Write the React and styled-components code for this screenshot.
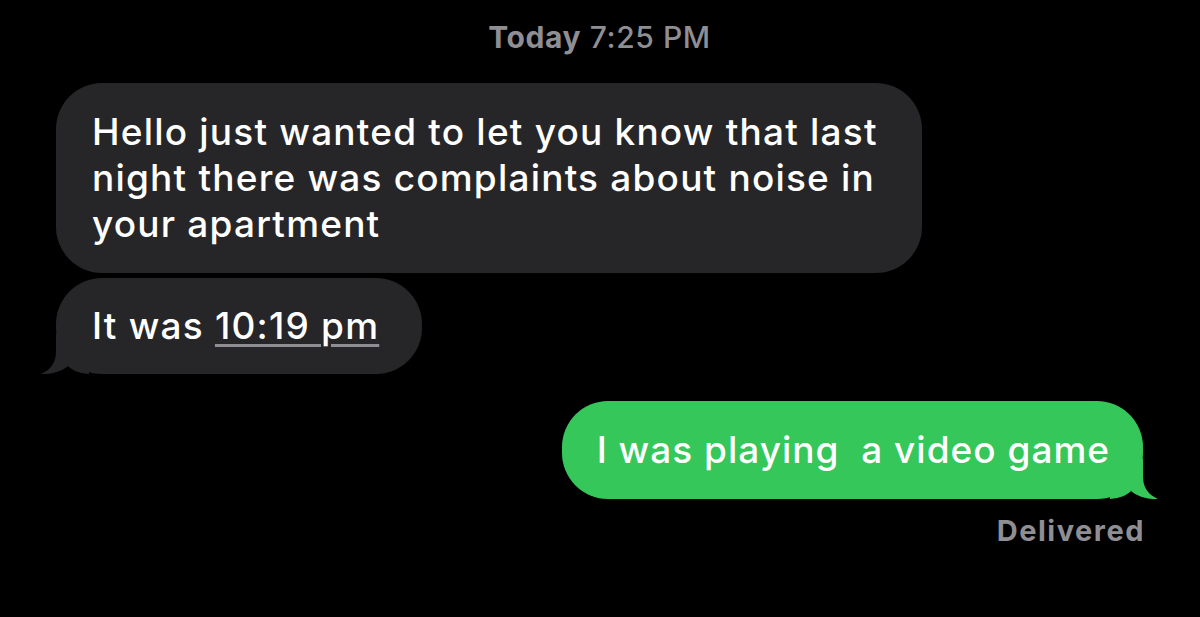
import React from "react";
import styled, { createGlobalStyle } from "styled-components";

const Global = createGlobalStyle`
  html, body { margin: 0; padding: 0; background: #000; }
  body { font-family: Inter, "Noto Sans", sans-serif; -webkit-font-smoothing: antialiased; }
`;

const Screen = styled.div`
  width: 1200px;
  height: 617px;
  background: #000;
  box-sizing: border-box;
  padding: 17px 57px 0 56px;
  display: flex;
  flex-direction: column;
  overflow: hidden;
`;

const Stamp = styled.div`
  text-align: center;
  color: #8e8e93;
  font-size: 30px;
  line-height: 40px;
  font-weight: 500;
  letter-spacing: 0.6px;
  margin-bottom: 26px;
  & b { font-weight: 700; }
`;

const Row = styled.div`
  display: flex;
  justify-content: ${(p) => (p.$out ? "flex-end" : "flex-start")};
  margin-top: ${(p) => p.$gap || 0}px;
`;

const Bubble = styled.div`
  position: relative;
  background: ${(p) => (p.$out ? "#35c759" : "#262628")};
  color: #fff;
  font-size: 37px;
  font-weight: 500;
  line-height: 46px;
  letter-spacing: ${(p) => (p.$out ? 1.0 : 1.2)}px;
  border-radius: 46px;
  padding: ${(p) => p.$py || 26}px ${(p) => p.$pr || 42}px ${(p) => p.$py || 26}px ${(p) => p.$pl || 36}px;
  white-space: pre;
`;

const Tail = styled.svg`
  position: absolute;
  bottom: 0;
  width: 48px;
  height: 40px;
  ${(p) => (p.$out ? "right: -15px; transform: scaleX(-1);" : "left: -15px;")}
`;

const Link = styled.span`
  text-decoration: underline;
  text-decoration-color: #8e8e93;
  text-decoration-thickness: 3px;
  text-underline-offset: 5px;
  text-decoration-skip-ink: auto;
`;

const Status = styled.div`
  align-self: flex-end;
  color: #8e8e93;
  font-size: 29px;
  font-weight: 700;
  letter-spacing: 1.5px;
  line-height: 34px;
  margin-top: 15px;
  margin-right: -2px;
`;

function BubbleTail({ out, color }) {
  return (
    <Tail $out={out} viewBox="0 0 48 40">
      <path
        d="M15 0 L15 18 C15 29 9 36 0 40 C10 40.5 20 38 27 32 C31 36 37 39 48 40 L48 0 Z"
        fill={color}
      />
    </Tail>
  );
}

export default function App() {
  return (
    <>
      <Global />
      <Screen>
        <Stamp>
          <b>Today</b> 7:25 PM
        </Stamp>
        <Row>
          <Bubble $pr={44}>
            {"Hello just wanted to let you know that last\nnight there was complaints about noise in\nyour apartment"}
          </Bubble>
        </Row>
        <Row $gap={5}>
          <Bubble $py={25} $pr={43}>
            It was <Link>10:19 pm</Link>
            <BubbleTail color="#262628" />
          </Bubble>
        </Row>
        <Row $out $gap={27}>
          <Bubble $out $pl={35} $pr={33}>
            {"I was playing  a video game"}
            <BubbleTail out color="#35c759" />
          </Bubble>
        </Row>
        <Status>Delivered</Status>
      </Screen>
    </>
  );
}
